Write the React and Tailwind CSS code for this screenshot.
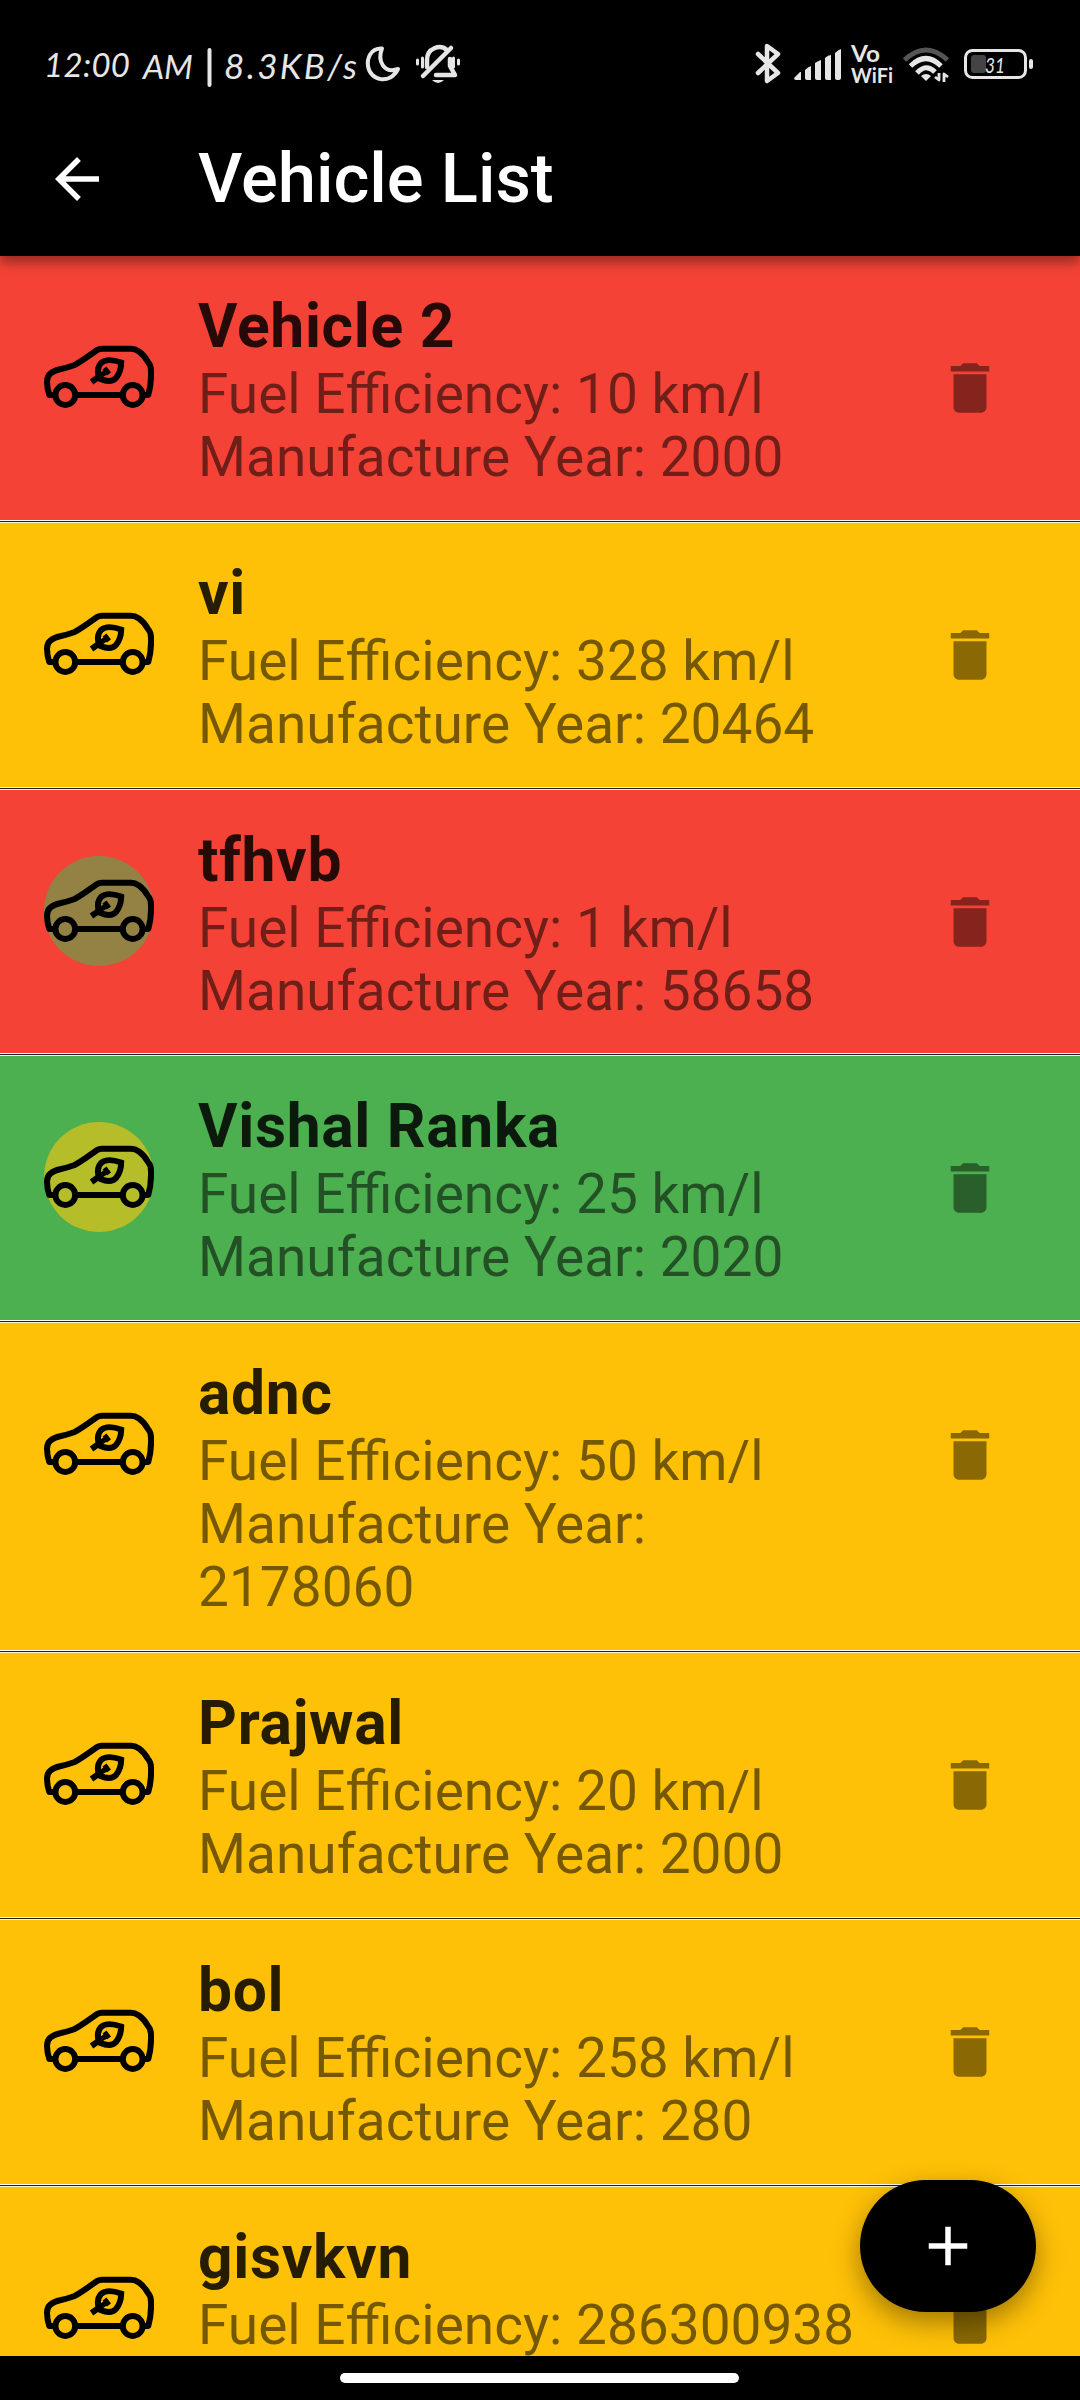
const rows = [
  { name: 'Vehicle 2', eff: '10 km/l', year: '2000', bg: 'bg-[#f44336]', h: 'h-[264px]' },
  { name: 'vi', eff: '328 km/l', year: '20464', bg: 'bg-[#ffc107]', h: 'h-[264px]' },
  { name: 'tfhvb', eff: '1 km/l', year: '58658', bg: 'bg-[#f44336]', h: 'h-[263px]', dot: 'bg-[#948144]' },
  { name: 'Vishal Ranka', eff: '25 km/l', year: '2020', bg: 'bg-[#4caf50]', h: 'h-[264px]', dot: 'bg-[#b5bd28]' },
  { name: 'adnc', eff: '50 km/l', year: '2178060', bg: 'bg-[#ffc107]', h: 'h-[327px]' },
  { name: 'Prajwal', eff: '20 km/l', year: '2000', bg: 'bg-[#ffc107]', h: 'h-[264px]' },
  { name: 'bol', eff: '258 km/l', year: '280', bg: 'bg-[#ffc107]', h: 'h-[264px]' },
  { name: 'gisvkvn', eff: '286300938', bg: 'bg-[#ffc107]', h: 'h-[264px]' },
];

function CarIcon() {
  return (
    <svg className="block h-[110px] w-[110px]" viewBox="0 0 110 110" fill="none" stroke="#000" strokeWidth="6">
      <path d="M10 73H5.300Q3 66 3 59.700Q3 54 6.500 51.500Q10 48.500 16 47.300Q24 45.500 30 43.300Q36 40 41 36.500L51 29.500Q54 26.700 58 26.700H87Q91 26.700 95 29.500Q100 33 104 40Q107 43 107 49Q107.500 62 104.300 73H100" strokeLinejoin="round" />
      <path d="M32 73H78" />
      <circle cx="21.300" cy="73" r="9.900" />
      <circle cx="88.700" cy="73" r="9.900" />
      <path d="M47.500 60L56 54" strokeWidth="6" />
      <path d="M54.500 54Q52.500 46 57 41Q63 35.500 77.200 40.500Q77 50 72 56Q67 61.500 56.500 57Z" />
      <path d="M54 55L64.500 48.500M60.500 46L65 52" strokeWidth="5" />
    </svg>
  );
}

function TrashIcon() {
  return (
    <svg className="h-[66px] w-[66px]" viewBox="0 0 24 24" fill="#000" fillOpacity="0.460">
      <path d="M6 19c0 1.100.9 2 2 2h8c1.100 0 2-.9 2-2V7H6v12zM19 4h-3.500l-1-1h-5l-1 1H5v2h14V4z" />
    </svg>
  );
}

function Row({ name, eff, year, bg, h, dot }) {
  return (
    <div>
      <div className={`${bg} ${h} flex`}>
        <div className="w-[198px] shrink-0 pt-[66px] pl-[44px]">
          <div className={`${dot || ''} h-[110px] w-[110px] rounded-full`}>
            <CarIcon />
          </div>
        </div>
        <div className="w-[660px] shrink-0 pt-[35px]">
          <div className="h-[72px] text-[60.500px] leading-[71px] font-bold tracking-[0.700px] text-black/85">{name}</div>
          <div className="text-[55px] leading-[63px] whitespace-nowrap text-black/54">Fuel Efficiency: {eff}</div>
          {year && <div className="text-[55px] leading-[63px] text-black/54">Manufacture Year: {year}</div>}
        </div>
        <div className="flex h-[264px] w-[222px] items-center justify-center pl-[2px]">
          <TrashIcon />
        </div>
      </div>
      <div className="h-px bg-white" />
      <div className="h-px bg-[#202020]" />
      <div className="h-px bg-[#fff3cb]" />
    </div>
  );
}

function StatusBar() {
  return (
    <div className="flex h-[128px] shrink-0 items-start">
      <svg className="block h-[128px] w-[1080px]" viewBox="0 0 1080 128" fill="none" stroke="#e6e6e6" strokeLinecap="round" strokeLinejoin="round">
        <g fill="#e6e6e6" stroke="none" fontFamily="Lato, sans-serif" fontStyle="italic" fontSize="33">
          <text x="44" y="77" textLength="86" lengthAdjust="spacing">12:00</text>
          <text x="143" y="79" textLength="50" lengthAdjust="spacingAndGlyphs">AM</text>
          <text x="224" y="79" fontSize="35" textLength="133" lengthAdjust="spacing">8.3KB/s</text>
        </g>
        <path d="M209.500 50V85" strokeWidth="4" />
        <path d="M382 48.500C370 48 367 59 368 66C370 81 390 85 398 69C384 74 377 61 382 48.500Z" strokeWidth="4" />
        <g strokeWidth="4.500">
          <path d="M423 76L451 48" />
          <path d="M427 67V60C427 48 440 44 447 50M450 59V66L455 75H436" />
          <path d="M417.500 60V64M422.500 58V67M453.500 58V67M458.500 60V64" strokeWidth="3" />
        </g>
        <path d="M432 80H444Q438 86 432 80Z" fill="#e6e6e6" stroke="none" />
        <path d="M758 54L778 73L767 81V46L778 54L758 73" strokeWidth="4.500" />
        <g fill="#e6e6e6" stroke="none">
          <path d="M794 78L800 72H801V80H796Q794 80 794 78ZM805 70Q808 67 811 66V80H807Q805 80 805 78ZM815 63Q818 61 821 60V80H817Q815 80 815 78ZM825 58Q828 55 831 55V80H827Q825 80 825 78ZM835 53Q838 50 841 49V78Q841 80 839 80H837Q835 80 835 78Z" />
          <g fontFamily="Lato, sans-serif" fontWeight="700">
            <text x="851" y="61.500" fontSize="22.500" textLength="29" lengthAdjust="spacingAndGlyphs">Vo</text>
            <text x="851" y="82.500" fontSize="21" textLength="42" lengthAdjust="spacingAndGlyphs">WiFi</text>
          </g>
        </g>
        <path d="M904.500 60Q926 40 947.500 60" stroke="#555" strokeWidth="5" strokeLinecap="butt" />
        <path d="M910.500 66Q926 51 941 66M917 73Q926 63 935 72" strokeWidth="5" strokeLinecap="butt" />
        <path d="M921 76Q926 72 931 76L926 81Z" fill="#e6e6e6" stroke="none" />
        <path d="M939 73V80L935 77M944 82V74L948 77" strokeWidth="2.800" strokeLinecap="butt" />
        <rect x="965.500" y="50.500" width="60" height="27" rx="7" strokeWidth="3" />
        <rect x="971" y="55" width="15" height="18" rx="3" fill="#444" stroke="none" />
        <path d="M1031 61V67" strokeWidth="4" />
        <text x="985" y="73" fill="#e6e6e6" stroke="none" fontFamily="Lato, sans-serif" fontStyle="italic" fontSize="21" textLength="20" lengthAdjust="spacingAndGlyphs">31</text>
      </svg>
    </div>
  );
}

export default function App() {
  return (
    <div className="relative flex h-[2400px] w-[1080px] flex-col overflow-hidden bg-black font-[Roboto,sans-serif]">
      <header className="relative z-10 h-[256px] shrink-0 bg-black shadow-[0_6px_12px_rgba(0,0,0,0.400)]">
        <StatusBar />
        <div className="flex h-[102px] items-center">
          <svg className="ml-[44px] h-[66px] w-[66px]" viewBox="0 0 24 24" fill="#fff">
            <path d="M20 11H7.830l5.590-5.590L12 4l-8 8 8 8 1.410-1.410L7.830 13H20v-2z" />
          </svg>
          <h1 className="ml-[88px] text-[68.750px] leading-[80px] font-medium text-white">Vehicle List</h1>
        </div>
      </header>
      <main className="h-[2100px] shrink-0 overflow-hidden">
        {rows.map((r) => (
          <Row key={r.name} {...r} />
        ))}
      </main>
      <footer className="flex h-[44px] shrink-0 bg-black pt-[17px] pl-[340px]">
        <div className="h-[10px] w-[399px] rounded-full bg-white" />
      </footer>
      <button className="absolute top-[2180px] left-[860px] flex h-[132px] w-[176px] items-center justify-center rounded-[66px] bg-black shadow-[0_10px_28px_rgba(0,0,0,0.380)]">
        <svg className="h-[66px] w-[66px]" viewBox="0 0 24 24" fill="#fff">
          <path d="M19 13h-6v6h-2v-6H5v-2h6V5h2v6h6v2z" />
        </svg>
      </button>
    </div>
  );
}
